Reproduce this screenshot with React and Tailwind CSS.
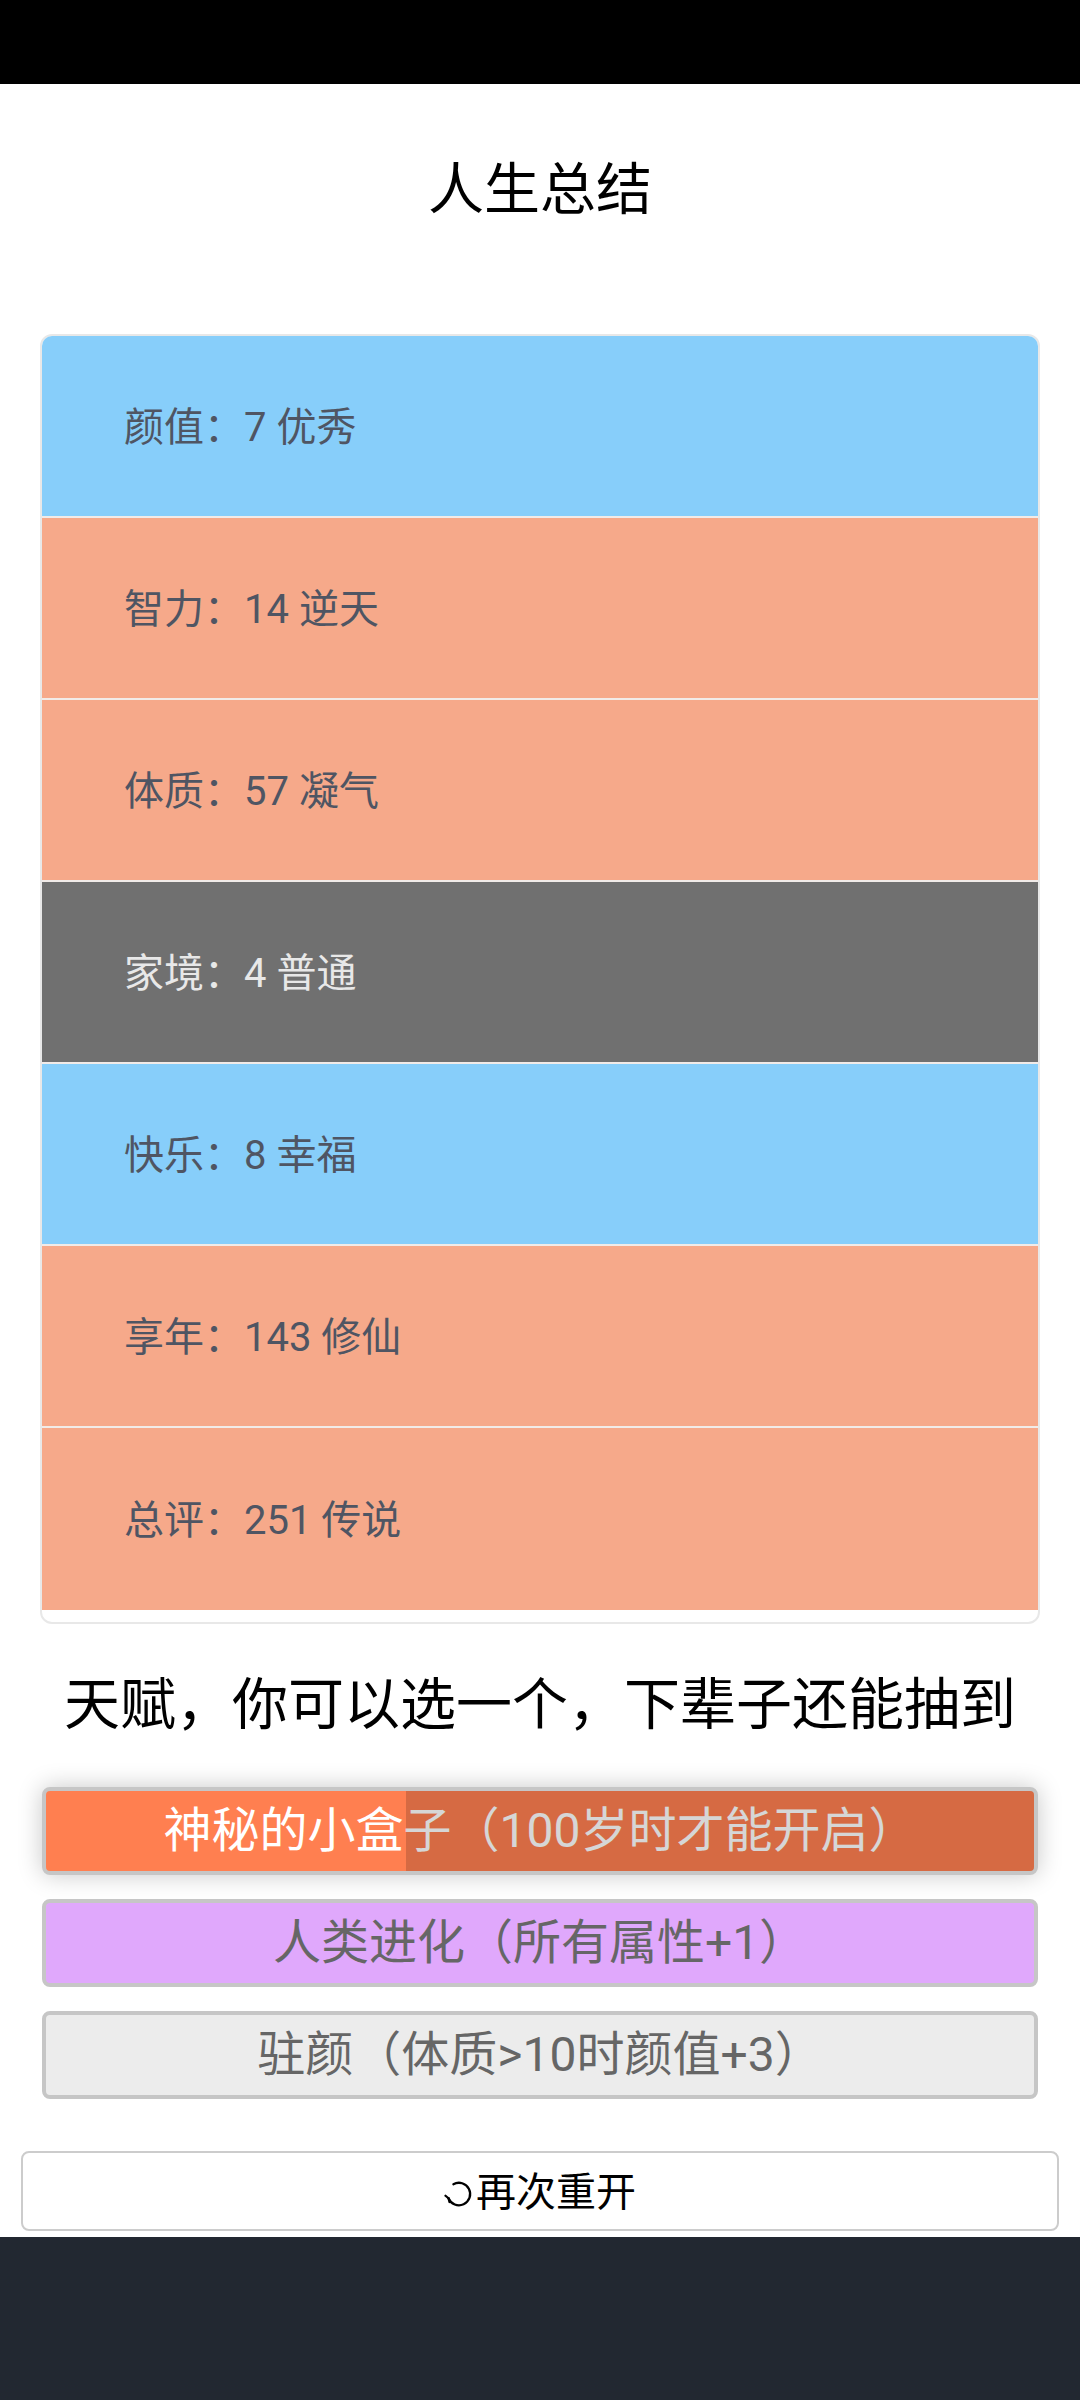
const FONT = { fontFamily: "Roboto, 'Noto Sans CJK SC', sans-serif" };

const summary = [
  { label: '颜值', value: '7 优秀', tone: 'blue' },
  { label: '智力', value: '14 逆天', tone: 'salmon' },
  { label: '体质', value: '57 凝气', tone: 'salmon' },
  { label: '家境', value: '4 普通', tone: 'gray' },
  { label: '快乐', value: '8 幸福', tone: 'blue' },
  { label: '享年', value: '143 修仙', tone: 'salmon' },
  { label: '总评', value: '251 传说', tone: 'salmon' },
];

const toneClass = {
  blue: 'bg-[#87cefa] text-[#4f5563]',
  salmon: 'bg-[#f6a98a] text-[#4f5563]',
  gray: 'bg-[#707070] text-[#e8e8e8]',
};

function RestartIcon() {
  return (
    <svg width="30" height="30" viewBox="0 0 24 24" fill="none" stroke="#000" strokeWidth="1.8" strokeLinecap="round" className="shrink-0 mt-[10px] mr-[2px]">
      <path d="M7.5 4.2 A9 9 0 1 1 3.6 15.4" />
      <path d="M3.6 15.4 L1.2 13.4" />
      <path d="M3.6 15.4 L4.4 18.4" />
    </svg>
  );
}

export default function App() {
  return (
    <div className="w-[1080px] min-h-[2400px] bg-white flex flex-col" style={FONT}>
      <div className="h-[84px] bg-black" />

      <h1 className="pt-[65px] pb-[103px] text-center text-[56px] leading-[82px] text-black font-normal">
        人生总结
      </h1>

      <div className="mx-[40px] border-2 border-[#e8e8e8] rounded-[12px] overflow-hidden pb-[12px] bg-white">
        <div className="divide-y-2 divide-[#f1ebe8]">
          {summary.map((row) => (
            <div
              key={row.label}
              className={`h-[182px] flex items-center pl-[82px] pt-[4px] text-[40px] ${toneClass[row.tone]}`}
            >
              {row.label}：{row.value}
            </div>
          ))}
        </div>
      </div>

      <h2 className="mt-[40px] mb-[41px] text-center text-[56px] leading-[82px] text-black font-normal">
        天赋，你可以选一个，下辈子还能抽到
      </h2>

      <div className="mx-[42px] flex flex-col gap-[24px]">
        <button className="relative h-[88px] rounded-[8px] border-[4px] border-[#c6c6c6] bg-[#ff7f50] text-white text-[48px] overflow-hidden shadow-[0_0_24px_rgba(0,0,0,0.22)]">
          神秘的小盒子（100岁时才能开启）
          <span className="absolute inset-y-0 right-0 left-[360px] bg-black/[0.16]" />
        </button>
        <button className="h-[88px] rounded-[8px] border-[4px] border-[#c6c6c6] bg-[#e0a8fc] text-[#666] text-[48px]">
          人类进化（所有属性+1）
        </button>
        <button className="h-[88px] rounded-[8px] border-[4px] border-[#c6c6c6] bg-[#ececec] text-[#666] text-[48px]">
          驻颜（体质&gt;10时颜值+3）
        </button>
      </div>

      <div className="px-[21px] mt-[52px]">
        <button className="w-full h-[80px] rounded-[8px] border-2 border-[#cccccc] bg-white flex items-start justify-center pt-[16px] text-[40px] leading-[48px] text-black">
          <RestartIcon />
          <span>再次重开</span>
        </button>
      </div>

      <div className="mt-[6px] flex-1 bg-[#222831]" />
    </div>
  );
}
